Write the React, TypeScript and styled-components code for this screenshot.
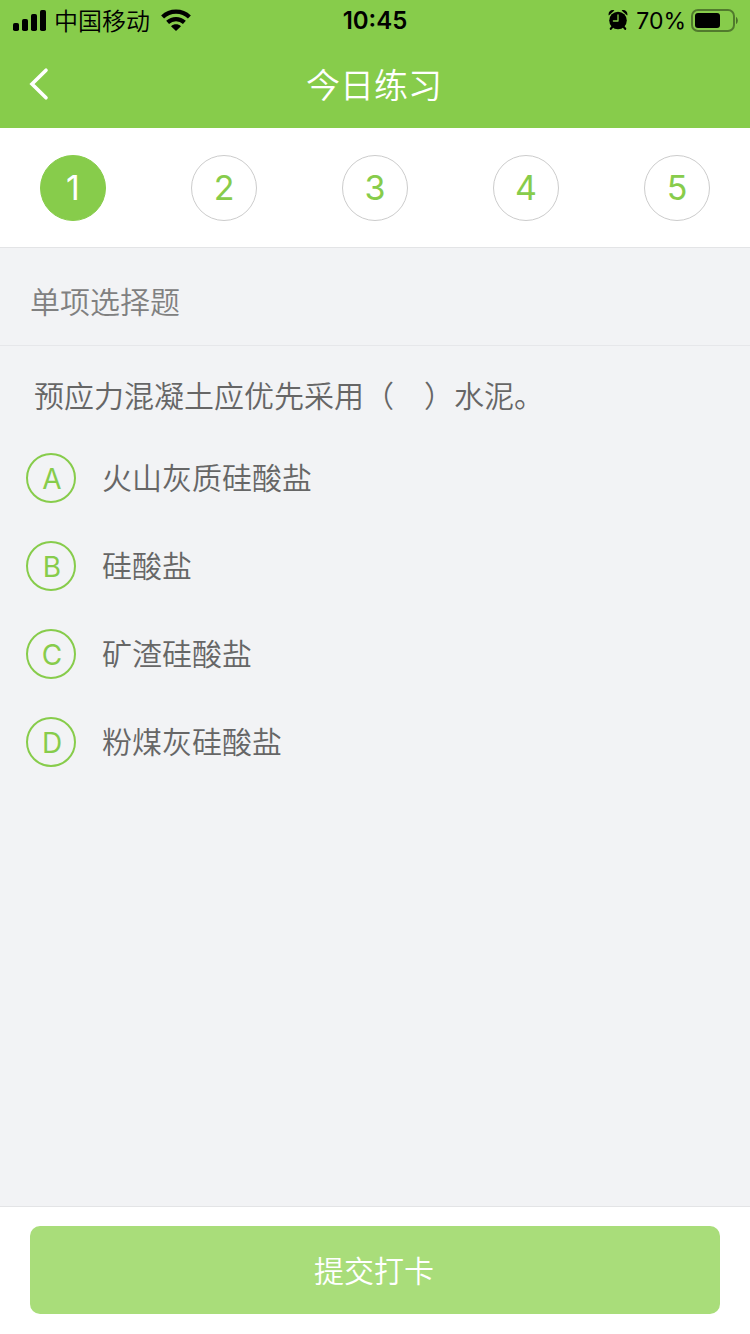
import React, { useState } from "react";
import styled, { createGlobalStyle } from "styled-components";

const green = "#87cc4b";

const GlobalStyle = createGlobalStyle`
  * { box-sizing: border-box; }
  body {
    margin: 0;
    background: #f2f3f5;
    font-family: Inter, "Noto Sans CJK SC", sans-serif;
    font-weight: 350;
  }
  button, input { font-family: inherit; font-weight: inherit; }
`;

const Screen = styled.div`
  min-height: 100vh;
  display: flex;
  flex-direction: column;
`;

const StatusBar = styled.div`
  display: grid;
  grid-template-columns: 1fr auto 1fr;
  align-items: center;
  height: 40px;
  padding: 1px 12px 0;
  background: ${green};
  color: #000;
  font-size: 24px;
  line-height: 40px;
`;

const StatusGroup = styled.div<{ $end?: boolean }>`
  display: flex;
  align-items: center;
  justify-content: ${(p) => (p.$end ? "flex-end" : "flex-start")};
  gap: ${(p) => (p.$end ? "4px" : "8px")};
  svg { margin-bottom: 3px; }
`;

const Carrier = styled.span`
  padding: 2px 3px 0 0;
  line-height: 36px;
`;

const Clock = styled.time`
  font-size: 24px;
  font-weight: 600;
`;

const Percent = styled.span`
  font-size: 23px;
  font-weight: 400;
  padding-left: 4px;
`;

const Header = styled.header`
  display: grid;
  grid-template-columns: 80px 1fr 80px;
  align-items: center;
  height: 88px;
  background: ${green};
`;

const BackButton = styled.button`
  display: flex;
  align-items: center;
  height: 88px;
  padding: 0 28px;
  border: 0;
  background: none;
  color: #fff;
`;

const Title = styled.h1`
  margin: 0;
  padding: 4px 2px 0 0;
  color: #fff;
  font-size: 34px;
  font-weight: 350;
  line-height: 84px;
  text-align: center;
`;

const Steps = styled.nav`
  display: flex;
  justify-content: space-between;
  padding: 27px 40px 26px;
  background: #fff;
  border-bottom: 1px solid #e3e4e6;
`;

const Step = styled.button<{ $active: boolean }>`
  width: 66px;
  height: 66px;
  padding: 0;
  border: 1px solid ${(p) => (p.$active ? green : "#cccccc")};
  border-radius: 50%;
  background: ${(p) => (p.$active ? green : "#fff")};
  color: ${(p) => (p.$active ? "#fff" : green)};
  font-size: 34px;
  font-weight: 400;
  line-height: 64px;
`;

const Main = styled.main`
  flex: 1;
`;

const Kind = styled.h2`
  margin: 0;
  padding: 30px 30px 19px;
  border-bottom: 1px solid #e6e7ea;
  color: #808080;
  font-size: 30px;
  font-weight: 350;
  line-height: 48px;
`;

const Question = styled.fieldset`
  margin: 0;
  padding: 0 26px;
  border: 0;
  color: #666;
  font-size: 30px;
`;

const Prompt = styled.legend`
  padding: 26px 8px 33px;
  line-height: 48px;
`;

const Options = styled.div`
  display: flex;
  flex-direction: column;
  gap: 38px;
`;

const Option = styled.label`
  display: flex;
  align-items: center;
  gap: 26px;
  line-height: 50px;
`;

const Marker = styled.span`
  display: grid;
  place-items: center;
  width: 50px;
  height: 50px;
  color: ${green};
  > * { grid-area: 1 / 1; }
`;

const Radio = styled.input`
  appearance: none;
  width: 50px;
  height: 50px;
  margin: 0;
  border: 2px solid ${green};
  border-radius: 50%;
  &:checked { background: ${green}; }
  &:checked + span { color: #fff; }
`;

const Letter = styled.span`
  padding: 2px 0 0 2px;
  font-size: 28px;
  font-weight: 400;
  line-height: 48px;
`;

const Footer = styled.footer`
  padding: 19px 30px 20px;
  border-top: 1px solid #e3e4e6;
  background: #fff;
`;

const Submit = styled.button`
  display: block;
  width: 100%;
  height: 88px;
  padding: 0 2px 2px 0;
  border: 0;
  border-radius: 10px;
  background: #a9dd7a;
  color: #fff;
  font-size: 30px;
`;

const SignalIcon = () => (
  <svg width="34" height="22" viewBox="0 0 34 22" aria-hidden="true">
    <rect x="1" y="14" width="6" height="8" rx="1.8" />
    <rect x="10" y="10" width="6" height="12" rx="1.8" />
    <rect x="19" y="5" width="6" height="17" rx="1.8" />
    <rect x="28" y="1" width="6" height="21" rx="1.8" />
  </svg>
);

const WifiIcon = () => (
  <svg width="30" height="22" viewBox="0 0 30 22" aria-hidden="true">
    <g fill="none" stroke="#000" strokeWidth="4.2">
      <path d="M1.6 8C9 .8 21 .8 28.4 8" />
      <path d="M6.6 13.4C11.4 9 18.6 9 23.4 13.4" />
    </g>
    <path d="M10 17.2C13 14.6 17 14.6 20 17.2L15 22Z" />
  </svg>
);

const AlarmIcon = () => (
  <svg width="20" height="22" viewBox="0 0 20 22" aria-hidden="true">
    <circle cx="10" cy="11.5" r="8.8" />
    <path d="M.8 6.6C-.4 3 3 0 6.4 1.4ZM19.2 6.6C20.4 3 17 0 13.6 1.4Z" />
    <path d="M4.6 17.6L2.8 19.8M15.4 17.6L17.2 19.8" stroke="#000" strokeWidth="2.2" strokeLinecap="round" />
    <path d="M10 6V12H5.4" fill="none" stroke={green} strokeWidth="1.3" strokeLinecap="round" strokeLinejoin="round" />
  </svg>
);

const BatteryIcon = () => (
  <svg width="48" height="24" viewBox="0 0 48 24" aria-hidden="true">
    <rect x="2" y="2" width="42" height="21" rx="6" fill="none" stroke="#000" strokeOpacity=".4" strokeWidth="2" />
    <rect x="5" y="5" width="25" height="15" rx="3" />
    <path d="M46 9C48.4 10 48.4 15 46 16Z" fillOpacity=".45" />
  </svg>
);

const BackIcon = () => (
  <svg width="22" height="34" viewBox="0 0 22 34" aria-hidden="true">
    <path d="M18 3.2L4 17L18 30.8" fill="none" stroke="currentColor" strokeWidth="3.6" strokeLinecap="round" />
  </svg>
);

const answers = [
  { key: "A", text: "火山灰质硅酸盐" },
  { key: "B", text: "硅酸盐" },
  { key: "C", text: "矿渣硅酸盐" },
  { key: "D", text: "粉煤灰硅酸盐" },
];

export default function App() {
  const [step, setStep] = useState(1);
  return (
    <Screen lang="zh-CN">
      <GlobalStyle />
      <StatusBar>
        <StatusGroup>
          <SignalIcon />
          <Carrier>中国移动</Carrier>
          <WifiIcon />
        </StatusGroup>
        <Clock>10:45</Clock>
        <StatusGroup $end>
          <AlarmIcon />
          <Percent>70%</Percent>
          <BatteryIcon />
        </StatusGroup>
      </StatusBar>
      <Header>
        <BackButton type="button" aria-label="返回">
          <BackIcon />
        </BackButton>
        <Title>今日练习</Title>
      </Header>
      <Steps>
        {[1, 2, 3, 4, 5].map((n) => (
          <Step key={n} type="button" $active={n === step} onClick={() => setStep(n)}>
            {n}
          </Step>
        ))}
      </Steps>
      <Main>
        <Kind>单项选择题</Kind>
        <Question>
          <Prompt>预应力混凝土应优先采用（{"\u3000"}）水泥。</Prompt>
          <Options>
            {answers.map((a) => (
              <Option key={a.key}>
                <Marker>
                  <Radio type="radio" name="answer" value={a.key} />
                  <Letter>{a.key}</Letter>
                </Marker>
                {a.text}
              </Option>
            ))}
          </Options>
        </Question>
      </Main>
      <Footer>
        <Submit type="button">提交打卡</Submit>
      </Footer>
    </Screen>
  );
}
